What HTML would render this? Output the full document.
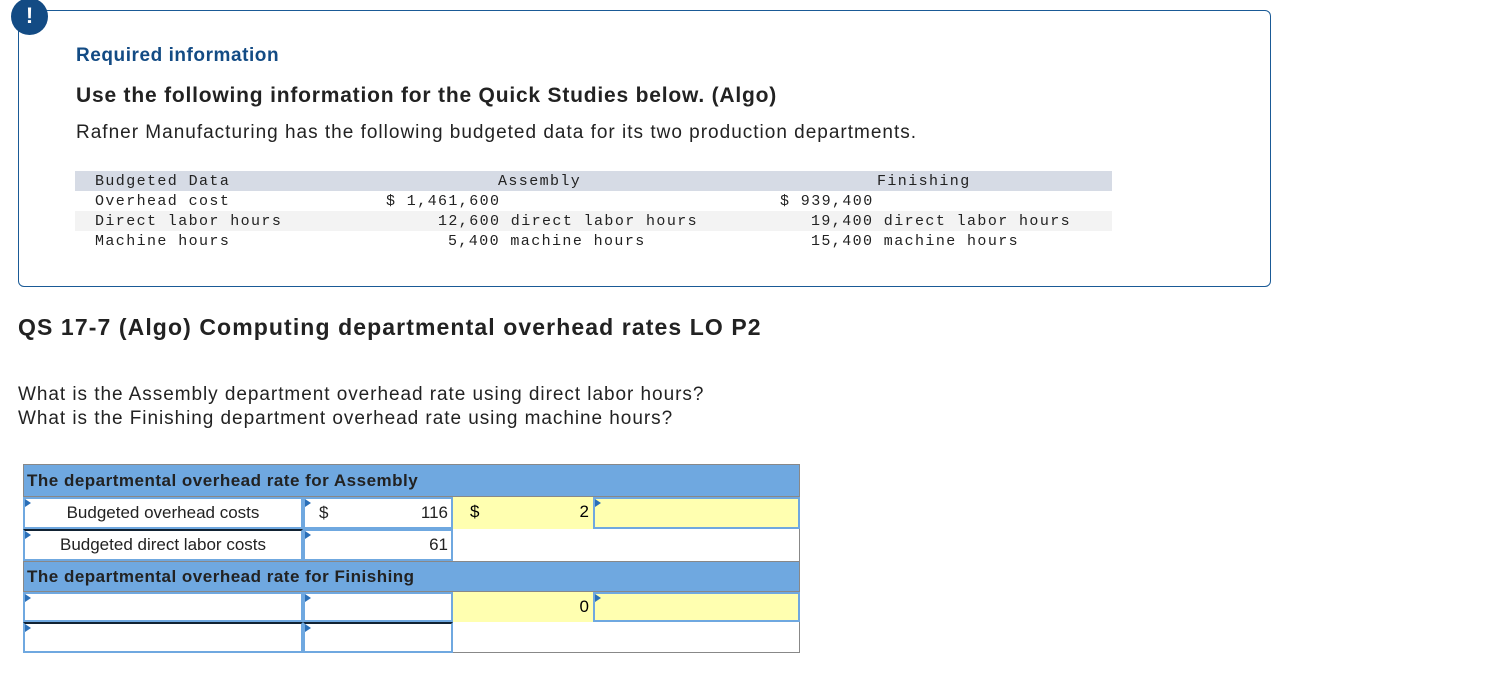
<!DOCTYPE html>
<html><head><style>
body{margin:0;width:1512px;height:678px;background:#fff;position:relative;font-family:"Liberation Sans",Arial,sans-serif;overflow:hidden}
.a{position:absolute;white-space:nowrap}
.box{position:absolute;left:18px;top:10px;width:1251px;height:275px;border:1px solid #1a5a96;border-radius:6px}
.ic{position:absolute;left:11px;top:-2px;width:37px;height:37px;border-radius:50%;background:#134b84;color:#fff;font-weight:bold;font-size:22px;text-align:center;line-height:35px}
.m{font-family:"Liberation Mono",monospace;font-size:15px;letter-spacing:1.4px;color:#222}
.c{position:absolute;box-sizing:border-box}
.hd{background:#6fa8e0;border:1px solid #888;font-weight:bold;font-size:17px;color:#222;padding:6px 3px;letter-spacing:0.5px}
.in{border:2px solid #6fa8e0;background:#fff;font-size:17px;color:#222}
.in:before{content:"";position:absolute;left:0;top:0;border-left:6px solid #2a6fb8;border-top:4px solid transparent;border-bottom:4px solid transparent}
.y{background:#ffffb0}
</style></head><body>
<div class="box"></div>
<div class="ic">!</div>
<div class="a" style="left:76px;top:45px;font-size:19px;font-weight:bold;color:#134b84;letter-spacing:0.55px">Required information</div>
<div class="a" style="left:76px;top:84px;font-size:21px;font-weight:bold;color:#222;letter-spacing:0.8px">Use the following information for the Quick Studies below. (Algo)</div>
<div class="a" style="left:76px;top:122px;font-size:19px;color:#222;letter-spacing:1px">Rafner Manufacturing has the following budgeted data for its two production departments.</div>
<div class="c" style="left:75px;top:171px;width:1037px;height:20px;background:#d6dbe5"></div>
<div class="c" style="left:75px;top:211px;width:1037px;height:20px;background:#f3f3f3"></div>
<div class="a m" style="left:95px;top:173px">Budgeted Data</div>
<div class="a m" style="left:498px;top:173px">Assembly</div>
<div class="a m" style="left:877px;top:173px">Finishing</div>
<div class="a m" style="left:95px;top:193px">Overhead cost</div>
<div class="a m" style="left:386px;top:193px">$ 1,461,600</div>
<div class="a m" style="left:780px;top:193px">$ 939,400</div>
<div class="a m" style="left:95px;top:213px">Direct labor hours</div>
<div class="a m" style="left:438px;top:213px">12,600 direct labor hours</div>
<div class="a m" style="left:811px;top:213px">19,400 direct labor hours</div>
<div class="a m" style="left:95px;top:233px">Machine hours</div>
<div class="a m" style="left:448px;top:233px">5,400 machine hours</div>
<div class="a m" style="left:811px;top:233px">15,400 machine hours</div>
<div class="a" style="left:18px;top:314px;font-size:23px;font-weight:bold;color:#222;letter-spacing:1.1px">QS 17-7 (Algo) Computing departmental overhead rates LO P2</div>
<div class="a" style="left:18px;top:383px;font-size:19px;color:#222;line-height:24px;letter-spacing:0.95px">What is the Assembly department overhead rate using direct labor hours?<br>What is the Finishing department overhead rate using machine hours?</div>

<div class="c" style="left:23px;top:464px;width:777px;height:189px;border:1px solid #888"></div>
<div class="c hd" style="left:23px;top:464px;width:777px;height:33px">The departmental overhead rate for Assembly</div>
<div class="c in" style="left:23px;top:497px;width:280px;height:32px;text-align:center;line-height:28px">Budgeted overhead costs</div>
<div class="c in" style="left:303px;top:497px;width:150px;height:32px;line-height:28px"><span style="position:absolute;left:14px">$</span><span style="position:absolute;right:3px">116</span></div>
<div class="c y" style="left:453px;top:497px;width:140px;height:32px;line-height:30px;font-size:17px"><span style="position:absolute;left:17px">$</span><span style="position:absolute;right:4px">2</span></div>
<div class="c in y" style="left:593px;top:497px;width:207px;height:32px"></div>
<div class="c in" style="left:23px;top:529px;width:280px;height:32px;text-align:center;line-height:28px;border-top-color:#123">Budgeted direct labor costs</div>
<div class="c in" style="left:303px;top:529px;width:150px;height:32px;line-height:28px"><span style="position:absolute;right:3px">61</span></div>
<div class="c hd" style="left:23px;top:561px;width:777px;height:31px;padding-top:5px">The departmental overhead rate for Finishing</div>
<div class="c in" style="left:23px;top:592px;width:280px;height:30px"></div>
<div class="c in" style="left:303px;top:592px;width:150px;height:30px"></div>
<div class="c y" style="left:453px;top:592px;width:140px;height:30px;line-height:30px;font-size:17px"><span style="position:absolute;right:4px">0</span></div>
<div class="c in y" style="left:593px;top:592px;width:207px;height:30px"></div>
<div class="c in" style="left:23px;top:622px;width:280px;height:31px;border-top-color:#123"></div>
<div class="c in" style="left:303px;top:622px;width:150px;height:31px;border-top-color:#123"></div>
</body></html>
